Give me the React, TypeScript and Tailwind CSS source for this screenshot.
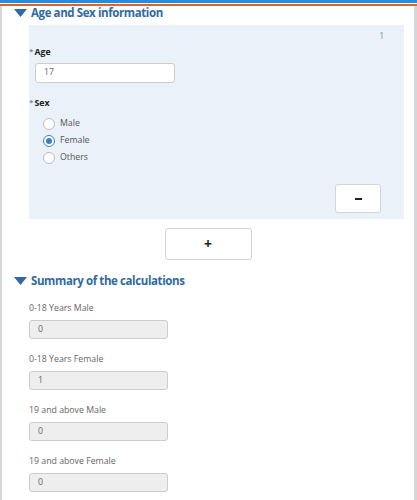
import React from "react";

const font = { fontFamily: '"Open Sans", "Noto Sans", sans-serif' };

function Caret() {
  return (
    <svg width="13" height="8" viewBox="0 0 13 8" className="shrink-0">
      <polygon points="0,0 13,0 6.5,8" fill="#2f6aa3" />
    </svg>
  );
}

function SectionHeader({ title }: { title: string }) {
  return (
    <div className="flex items-center gap-[4px] pl-[12px] h-[14px]">
      <Caret />
      <span className="text-[11.5px] font-bold tracking-[-0.4px] text-[#2f6aa3] leading-none">{title}</span>
    </div>
  );
}

function Radio({ label, checked }: { label: string; checked?: boolean }) {
  return (
    <div className="flex items-center gap-[5px] h-[17px]">
      <span
        className={
          "w-[12px] h-[12px] rounded-full border flex items-center justify-center bg-white " +
          (checked ? "border-[#3a7fc4]" : "border-[#bdbdbd]")
        }
      >
        {checked && <span className="w-[6px] h-[6px] rounded-full bg-[#3a7fc4]" />}
      </span>
      <span className="text-[8.75px] text-[#555]">{label}</span>
    </div>
  );
}

function SummaryField({ label, value }: { label: string; value: string }) {
  return (
    <div className="flex flex-col">
      <div className="text-[8.75px] text-[#666] h-[14px] leading-[14px]">{label}</div>
      <div className="mt-[5px] w-[139px] h-[19px] bg-[#eeeeee] border border-[#cccccc] rounded-[3px] flex items-center pl-[8px] text-[8.75px] text-[#666]">
        {value}
      </div>
    </div>
  );
}

export default function App() {
  return (
    <div style={font} className="w-[417px] h-[500px] bg-white overflow-hidden flex flex-col">
      <div className="h-[3px] shrink-0 bg-[#2a8ae0]" />
      <div className="h-[1px] shrink-0 bg-white" />
      <div className="h-[2px] shrink-0 bg-[#e0661c]" />
      <div className="flex-1 flex min-h-0">
        <div className="w-[2px] bg-[#d6d6d6]" />
        <div className="flex-1 flex flex-col">
          <SectionHeader title="Age and Sex information" />
          <div className="ml-[27px] mr-[10px] mt-[5px] bg-[#eaf1f8] h-[194px] relative pt-[21px] shrink-0">
            <span className="absolute right-[20px] top-[5px] text-[8.5px] text-[#7a8ea3]">1</span>
            <div className="flex items-start h-[12px]">
              <span className="text-[8px] text-[#2f6aa3] leading-none mt-[1px]">*</span>
              <span className="text-[8.75px] font-bold text-[#222] ml-[1px] leading-[12px]">Age</span>
            </div>
            <div className="ml-[6px] mt-[5px] w-[140px] h-[20px] bg-white border border-[#cccccc] rounded-[3px] flex items-center pl-[8px] text-[8.75px] text-[#666]">
              17
            </div>
            <div className="flex items-start mt-[14px] h-[12px]">
              <span className="text-[8px] text-[#2f6aa3] leading-none mt-[1px]">*</span>
              <span className="text-[8.75px] font-bold text-[#222] ml-[1px] leading-[12px]">Sex</span>
            </div>
            <div className="ml-[14px] mt-[6px] flex flex-col">
              <Radio label="Male" />
              <Radio label="Female" checked />
              <Radio label="Others" />
            </div>
            <div className="absolute right-[23px] bottom-[6px] w-[46px] h-[29px] bg-white border border-[#d4d4d4] rounded-[3px] flex items-center justify-center">
              <span className="w-[7px] h-[2px] bg-[#222]" />
            </div>
          </div>
          <div className="flex justify-center mt-[9px]">
            <div className="w-[87px] h-[32px] bg-white border border-[#d4d4d4] rounded-[3px] flex items-center justify-center text-[14px] font-bold text-[#222] leading-none">
              +
            </div>
          </div>
          <div className="mt-[14px]">
            <SectionHeader title="Summary of the calculations" />
          </div>
          <div className="ml-[27px] mt-[13px] flex flex-col gap-[13px]">
            <SummaryField label="0-18 Years Male" value="0" />
            <SummaryField label="0-18 Years Female" value="1" />
            <SummaryField label="19 and above Male" value="0" />
            <SummaryField label="19 and above Female" value="0" />
          </div>
        </div>
        <div className="w-[3px] bg-[#d6d6d6]" />
      </div>
    </div>
  );
}
